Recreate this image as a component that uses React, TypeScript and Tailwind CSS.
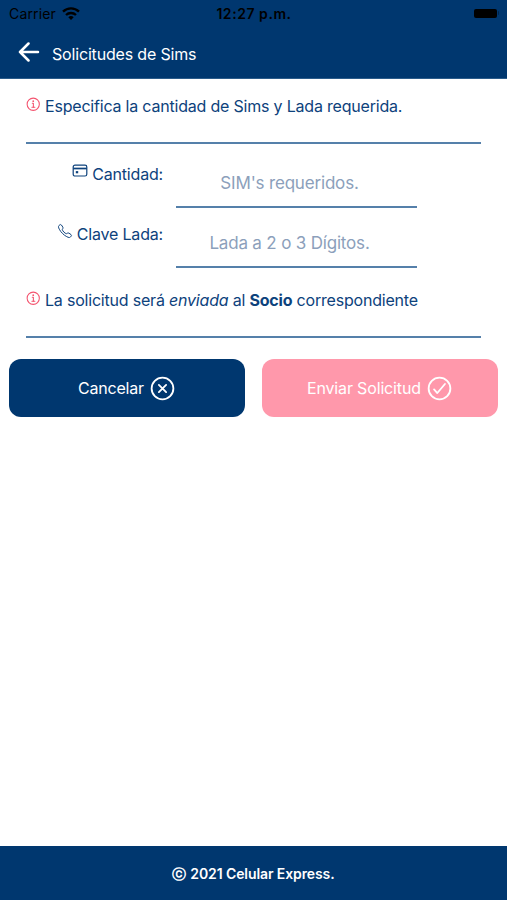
import React from "react";
import {
  IoCallOutline,
  IoCheckmarkCircleOutline,
  IoCloseCircleOutline,
  IoInformationCircleOutline,
} from "react-icons/io5";

interface NoticeProps {
  children: React.ReactNode;
}

interface FieldProps {
  icon: React.JSX.Element;
  label: string;
  placeholder: string;
}

const StatusBar = (): React.JSX.Element => {
  return (
    <div className="relative flex h-7 items-center justify-between pr-2 pl-[9px] text-black">
      <div className="flex items-center gap-[6px]">
        <span className="text-[14px] leading-7 tracking-[0.15px]">Carrier</span>
        <svg
          viewBox="0 0 18 13"
          fill="none"
          stroke="currentColor"
          className="mb-[2px] h-[13px] w-[18px]"
        >
          <path d="M1 4.6a11.5 11.5 0 0 1 16 0" strokeWidth="2.4" />
          <path d="M4 8a7.2 7.2 0 0 1 10 0" strokeWidth="2.3" />
          <path
            d="M9 13 6.3 10.2a3.9 3.9 0 0 1 5.4 0z"
            fill="currentColor"
            stroke="none"
          />
        </svg>
      </div>
      <span className="absolute inset-x-0 pl-px text-center text-[14px] leading-7 font-semibold tracking-[0.55px]">
        12:27 p.m.
      </span>
      <div className="flex items-center gap-px pb-[2px]">
        <span className="h-[9px] w-[23px] rounded-[2px] bg-black" />
        <span className="h-1 w-px rounded-r bg-[#00254d]" />
      </div>
    </div>
  );
};

const CardIcon = (): React.JSX.Element => {
  return (
    <svg
      viewBox="0 0 16 16"
      fill="none"
      stroke="currentColor"
      strokeWidth="1.2"
      className="mt-px h-4 w-4"
    >
      <rect x="1.2" y="2.2" width="13.6" height="10.8" rx="1.8" />
      <path d="M1.2 5.5h13.6" strokeWidth="1.7" />
      <path d="M3.8 9.2h2.4" strokeWidth="2.2" />
    </svg>
  );
};

const Notice = ({ children }: NoticeProps): React.JSX.Element => {
  return (
    <div className="flex h-[50px] items-start gap-[3px] border-b-2 border-[#5580aa]">
      <IoInformationCircleOutline className="-ml-px mt-[2px] h-[17px] w-[17px] shrink-0 text-[#f4546f]" />
      <p className="text-[16px] leading-6 tracking-[-0.2px] whitespace-nowrap">
        {children}
      </p>
    </div>
  );
};

const Field = ({ icon, label, placeholder }: FieldProps): React.JSX.Element => {
  return (
    <div className="flex h-[60px] items-start">
      <label className="flex w-[137px] items-start justify-end gap-1 pt-[2px]">
        {icon}
        <span className="text-[16px] leading-6 tracking-[-0.18px]">
          {label}
        </span>
      </label>
      <input
        type="text"
        placeholder={placeholder}
        className="ml-[13px] h-12 w-[241px] border-b-2 border-[#5580aa] pr-[14px] text-center text-[17px] tracking-[-0.18px] outline-none placeholder:text-[#8c9fbb]"
      />
    </div>
  );
};

const App = (): React.JSX.Element => {
  return (
    <div className="flex h-[900px] w-[507px] flex-col overflow-hidden bg-white font-[Inter,sans-serif] text-[#0d427c]">
      <header className="h-[79px] border-b border-[#2b5c8b] bg-[#00376f]">
        <StatusBar />
        <div className="flex h-12 items-center gap-3 pl-[18px] text-white">
          <svg
            viewBox="0 0 22 20"
            fill="none"
            stroke="currentColor"
            strokeWidth="2.5"
            strokeLinecap="round"
            strokeLinejoin="round"
            className="h-5 w-[22px]"
          >
            <path d="M10.5 1.5 2 10l8.5 8.5M2 10h18" />
          </svg>
          <h1 className="pt-1 text-[16px] leading-6 tracking-[-0.17px]">
            Solicitudes de Sims
          </h1>
        </div>
      </header>

      <main className="flex-1">
        <section className="px-[26px] pt-[15px]">
          <Notice>Especifica la cantidad de Sims y Lada requerida.</Notice>
          <div className="pt-4">
            <Field
              icon={<CardIcon />}
              label="Cantidad:"
              placeholder="SIM's requeridos."
            />
            <Field
              icon={<IoCallOutline className="mt-px h-4 w-4" />}
              label="Clave Lada:"
              placeholder="Lada a 2 o 3 Dígitos."
            />
          </div>
          <div className="pt-2">
            <Notice>
              La solicitud será <em>enviada</em> al{" "}
              <strong className="font-bold">Socio</strong> correspondiente
            </Notice>
          </div>
        </section>

        <div className="flex gap-[17px] pt-[21px] pr-[8.6px] pl-[9.4px]">
          <button className="flex h-[58px] flex-1 items-center justify-center gap-1 rounded-xl bg-[#00376f] text-[16px] tracking-[-0.2px] text-white">
            Cancelar
            <IoCloseCircleOutline className="h-[29px] w-[29px]" />
          </button>
          <button className="flex h-[58px] flex-1 items-center justify-center gap-1 rounded-xl bg-[#ff98ab] text-[16px] tracking-[-0.15px] text-white">
            Enviar Solicitud
            <IoCheckmarkCircleOutline className="h-[29px] w-[29px]" />
          </button>
        </div>
      </main>

      <footer className="flex h-[54px] items-center justify-center gap-1 bg-[#00376f] text-[14px] font-semibold tracking-[-0.1px] text-white">
        <span>ⓒ</span>
        <span>2021 Celular Express.</span>
      </footer>
    </div>
  );
};

export default App;
